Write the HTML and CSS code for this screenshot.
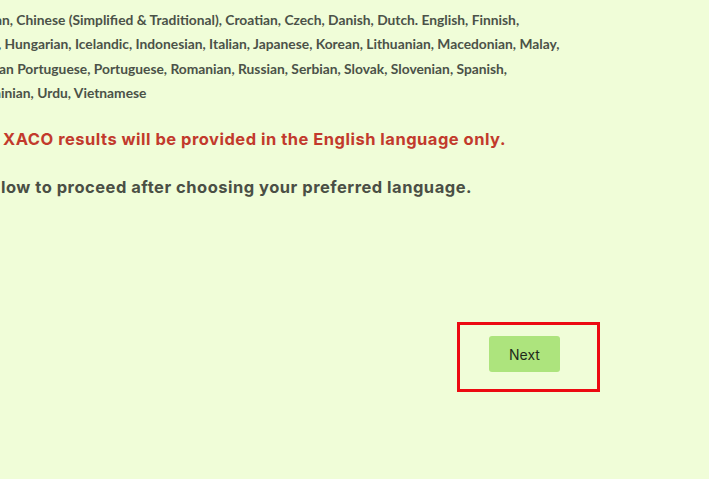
FILE: index.html
```html
<!DOCTYPE html>
<html lang="en">
<head>
  <meta charset="UTF-8" />
  <meta name="viewport" content="width=device-width, initial-scale=1.0" />
  <title>Choose Language</title>
  <link rel="stylesheet" href="styles.css">
</head>
<body>
  <div class="page">
    <div class="languages">
      <p class="lang-line l1">an, Chinese (Simplified &amp; Traditional), Croatian, Czech, Danish, Dutch. English, Finnish,</p>
      <p class="lang-line l2">, Hungarian, Icelandic, Indonesian, Italian, Japanese, Korean, Lithuanian, Macedonian, Malay,</p>
      <p class="lang-line l3">an Portuguese, Portuguese, Romanian, Russian, Serbian, Slovak, Slovenian, Spanish,</p>
      <p class="lang-line l4">ainian, Urdu, Vietnamese</p>
    </div>

    <h2 class="notice">XACO results will be provided in the English language only.</h2>
    <h2 class="instruction">low to proceed after choosing your preferred language.</h2>

    <div class="actions">
      <div class="highlight">
        <button class="next-btn">Next</button>
      </div>
    </div>
  </div>
</body>
</html>
```

FILE: styles.css
```css
body {
  margin: 0;
  padding: 0;
  background-color: #f0fdd8;
  overflow: hidden;
}

.page {
  min-height: 100vh;
  padding-top: 8px;
  box-sizing: border-box;
}

.lang-line {
  margin: 0;
  white-space: nowrap;
  font-family: Lato, "Open Sans", sans-serif;
  font-weight: 700;
  font-size: 13.8px;
  line-height: 24.3px;
  color: #4b5248;
}

.l1 {
  margin-left: -5px;
}

.l2 {
  margin-left: -2px;
}

.l3 {
  margin-left: -1px;
}

.l4 {
  margin-left: -6px;
}

.notice,
.instruction {
  margin: 0;
  white-space: nowrap;
  font-family: Inter, "DejaVu Sans", sans-serif;
  font-weight: 700;
  font-size: 16.5px;
  letter-spacing: 0.5px;
}

.notice {
  margin-top: 24px;
  margin-left: 3px;
  color: #c23a2c;
}

.instruction {
  margin-top: 28px;
  margin-left: 1px;
  color: #4a4f45;
}

.actions {
  display: flex;
  padding-left: 457px;
  padding-top: 125px;
}

.highlight {
  width: 137px;
  height: 64px;
  border: 3px solid #ec0a12;
}

.next-btn {
  margin: 11px 0 0 29px;
  width: 71px;
  height: 36px;
  border: none;
  border-radius: 3px;
  background-color: #ade47d;
  color: #1e2a1a;
  font-family: Inter, sans-serif;
  font-size: 14px;
  font-weight: 400;
  cursor: pointer;
}
```
